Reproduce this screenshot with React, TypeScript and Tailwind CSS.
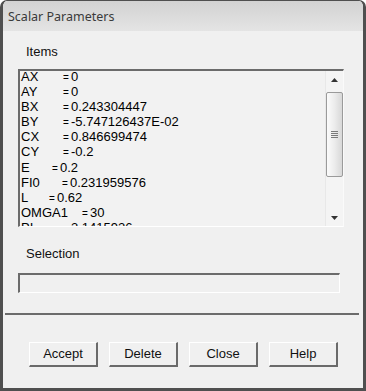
import React from "react";

const rows: { n: string; w: string; v: string }[] = [
  { n: "AX", w: "w-[42px]", v: "0" },
  { n: "AY", w: "w-[42px]", v: "0" },
  { n: "BX", w: "w-[42px]", v: "0.243304447" },
  { n: "BY", w: "w-[42px]", v: "-5.747126437E-02" },
  { n: "CX", w: "w-[42px]", v: "0.846699474" },
  { n: "CY", w: "w-[42px]", v: "-0.2" },
  { n: "E", w: "w-[31px]", v: "0.2" },
  { n: "FI0", w: "w-[41px]", v: "0.231959576" },
  { n: "L", w: "w-[28px]", v: "0.62" },
  { n: "OMGA1", w: "w-[61px]", v: "30" },
  { n: "PI", w: "w-[42px]", v: "3.1415926" },
];

const sans = "font-['Liberation_Sans',Arial,sans-serif]";

function Btn({ label }: { label: string }) {
  return (
    <div
      className={`w-[69px] h-[25px] flex items-center justify-center bg-[#f0f0f0] border-t border-l border-white border-b-2 border-r-2 border-b-[#6a6a6a] border-r-[#6a6a6a] text-[13px] text-[#111] ${sans}`}
    >
      {label}
    </div>
  );
}

export default function App() {
  return (
    <div className="w-[366px] h-[391px] bg-white">
      <div className="h-full flex flex-col border-[#4f4f4f] border-x-[3px] border-b-[3px] border-t rounded-t-[7px] overflow-hidden">
        <div className="h-[30px] shrink-0 bg-gradient-to-b from-[#d2d2d2] to-[#e4e4e4] pl-[5px] pt-[7px]">
          <div className="font-['Noto_Sans',sans-serif] text-[12.5px] leading-[17px] text-[#3a3a3a]">
            Scalar Parameters
          </div>
        </div>
        <div className={`flex-1 bg-[#f0f0f0] flex flex-col ${sans} text-[#111]`}>
          <div className="pl-[23px] pt-[13px] text-[13px] leading-[15px]">Items</div>
          <div className="ml-[15px] mt-[10px] w-[326px] h-[158px] border-t-2 border-l-2 border-t-[#6b6b6b] border-l-[#6b6b6b] border-b border-r border-b-white border-r-[#fafafa] bg-[#f2f2f2] flex overflow-hidden">
            <div className="flex-1 pl-[1px] -mt-[2px] text-[13px] leading-[15.1px] text-black overflow-hidden">
              {rows.map((r) => (
                <div key={r.n} className="whitespace-nowrap flex items-baseline h-[15.1px]">
                  <span className={`inline-block ${r.w}`}>{r.n}</span>
                  <span className="inline-block w-[8px] text-[10px] leading-none">=</span>
                  <span>{r.v}</span>
                </div>
              ))}
            </div>
            <div className="w-[18px] shrink-0 h-full bg-[#f4f4f4] border-l border-[#e8e8e8] flex flex-col">
              <div className="h-[17px] shrink-0 flex items-center justify-center">
                <svg width="7" height="4" viewBox="0 0 7 4">
                  <path d="M3.5 0 L7 4 L0 4 Z" fill="#333" />
                </svg>
              </div>
              <div className="h-[4px] shrink-0" />
              <div className="h-[85px] shrink-0 rounded-[2px] border border-[#9a9a9a] bg-gradient-to-r from-[#fbfbfb] via-[#ececec] to-[#d8d8d8] flex flex-col items-center justify-center gap-[1px]">
                <div className="w-[7px] h-[1px] bg-[#7a7a7a]" />
                <div className="w-[7px] h-[1px] bg-[#7a7a7a]" />
                <div className="w-[7px] h-[1px] bg-[#7a7a7a]" />
                <div className="w-[7px] h-[1px] bg-[#7a7a7a]" />
              </div>
              <div className="flex-1" />
              <div className="h-[17px] shrink-0 flex items-center justify-center">
                <svg width="7" height="4" viewBox="0 0 7 4">
                  <path d="M0 0 L7 0 L3.5 4 Z" fill="#333" />
                </svg>
              </div>
            </div>
          </div>
          <div className="pl-[23px] mt-[19px] text-[13px] leading-[15px]">Selection</div>
          <div className="ml-[15px] mt-[12px] w-[322px] h-[20px] border-t-2 border-l-2 border-t-[#6b6b6b] border-l-[#6b6b6b] border-b border-r border-b-white border-r-white bg-[#f0f0f0]" />
          <div className="ml-[2px] mt-[20px] w-[354px] h-[2px] bg-[#6b6b6b]" />
          <div className="mt-[27px] ml-[26px] flex gap-[11px]">
            <Btn label="Accept" />
            <Btn label="Delete" />
            <Btn label="Close" />
            <Btn label="Help" />
          </div>
          <div className="flex-1" />
        </div>
      </div>
    </div>
  );
}
